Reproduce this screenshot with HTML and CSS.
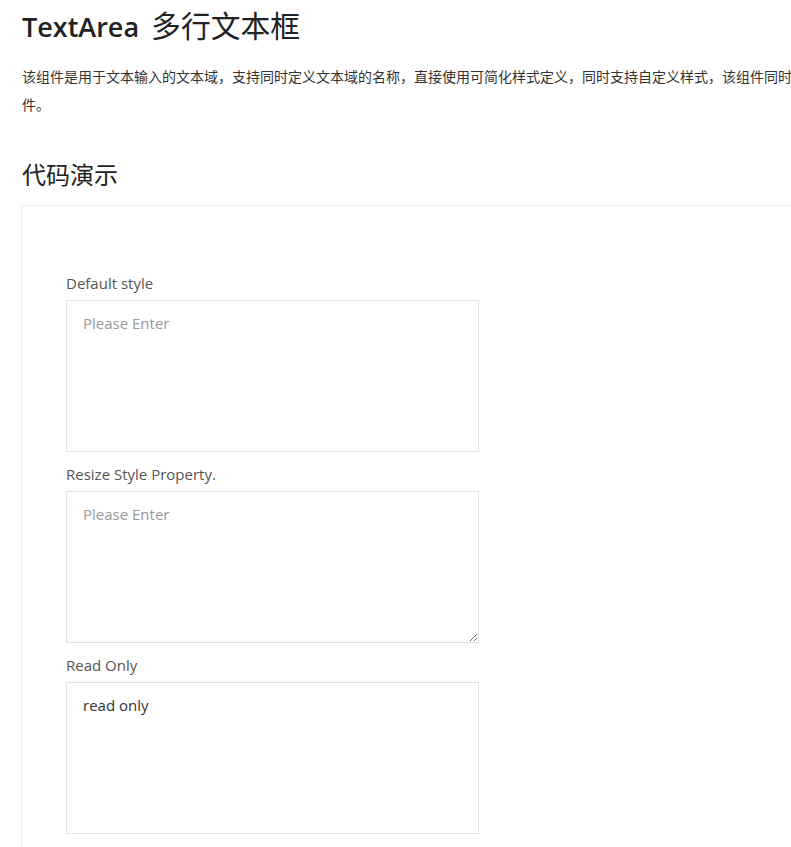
FILE: index.html
```html
<!DOCTYPE html>
<html lang="zh-CN">
<head>
<meta charset="utf-8">
<title>TextArea 多行文本框</title>
<link rel="stylesheet" href="styles.css">
</head>
<body>
<main class="page">
  <h1 class="title"><span class="title-en">TextArea</span> <span class="title-cn">多行文本框</span></h1>
  <p class="intro">该组件是用于文本输入的文本域，支持同时定义文本域的名称，直接使用可简化样式定义，同时支持自定义样式，该组件同时支持只读与调整大小属性的表单组件。</p>
  <h2 class="section-title">代码演示</h2>
  <section class="demo">
    <div class="field">
      <label class="field-label" for="ta1">Default style</label>
      <textarea id="ta1" class="textarea no-resize" placeholder="Please Enter"></textarea>
    </div>
    <div class="field">
      <label class="field-label" for="ta2">Resize Style Property.</label>
      <textarea id="ta2" class="textarea can-resize" placeholder="Please Enter"></textarea>
    </div>
    <div class="field">
      <label class="field-label" for="ta3">Read Only</label>
      <textarea id="ta3" class="textarea no-resize" readonly>read only</textarea>
    </div>
  </section>
</main>
</body>
</html>
```
FILE: styles.css
```css
html, body {
  margin: 0;
  padding: 0;
  background: #fff;
  overflow: hidden;
}
body {
  font-family: "Open Sans", "Noto Sans CJK SC", sans-serif;
  color: #333;
}
.page {
  width: 1100px;
  padding: 0 0 0 22px;
}
.title {
  margin: 3px 0 0;
  font-size: 27px;
  line-height: 42px;
  color: #222;
  font-weight: 400;
}
.title-en {
  font-weight: 600;
}
.title-cn {
  margin-left: 5px;
  font-family: "Noto Sans CJK SC", sans-serif;
  font-weight: 400;
  font-size: 29.8px;
}
.intro {
  margin: 14px 0 0;
  width: 985px;
  font-size: 14px;
  line-height: 28px;
  color: #333;
  font-family: "Noto Sans CJK SC", sans-serif;
}
.section-title {
  margin: 39px 0 0;
  font-size: 24px;
  line-height: 34px;
  font-weight: 400;
  color: #222;
  font-family: "Noto Sans CJK SC", sans-serif;
}
.demo {
  margin-top: 14px;
  margin-left: -1px;
  border: 1px solid #ececec;
  padding: 66px 0 20px 44px;
  display: flex;
  flex-direction: column;
  gap: 11px;
}
.field {
  display: flex;
  flex-direction: column;
  align-items: flex-start;
}
.field-label {
  font-size: 15px;
  line-height: 22px;
  color: #555;
  margin-bottom: 6px;
}
.textarea {
  box-sizing: border-box;
  width: 413px;
  height: 152px;
  margin: 0;
  border: 1px solid #e2e2e2;
  border-radius: 0;
  padding: 11px 16px;
  font-family: "Open Sans", sans-serif;
  font-size: 15px;
  line-height: 22px;
  color: #333;
  background: #fff;
  outline: none;
}
.textarea::placeholder {
  color: #999;
}
.no-resize {
  resize: none;
}
.can-resize {
  resize: both;
}
```
